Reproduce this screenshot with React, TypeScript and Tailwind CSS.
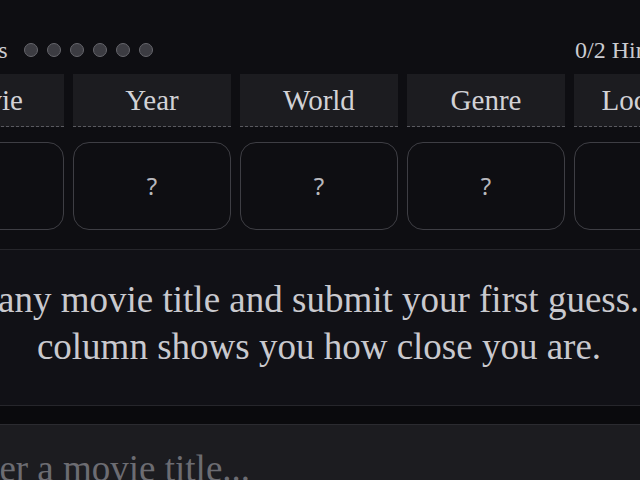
const COLUMNS = ['Movie', 'Year', 'World', 'Genre', 'Location'];

const serif = { fontFamily: '"Liberation Serif", "DejaVu Serif", serif' };

function GuessDots({ count }: { count: number }) {
  return (
    <div className="flex items-center gap-[9px]">
      {Array.from({ length: count }).map((_, i) => (
        <span
          key={i}
          className="block h-[14px] w-[14px] rounded-full border-[1.5px] border-[#66666c] bg-[#3c3c42]"
        />
      ))}
    </div>
  );
}

export default function App() {
  return (
    <div
      className="h-[480px] w-[640px] overflow-hidden bg-[#0e0e12] text-[#c9c9ce]"
      style={serif}
    >
      <div className="ml-[-94px] w-[826px]">
        {/* status row */}
        <div className="mt-[38px] flex h-[24px] items-center justify-between">
          <div className="flex items-center gap-[16px] pl-[23px]">
            <span className="text-[24px] leading-none text-[#cbcbd0]">Guesses</span>
            <GuessDots count={6} />
          </div>
          <span className="w-[157px] text-[24px] leading-none text-[#cbcbd0]">0/2 Hints</span>
        </div>

        {/* column headers */}
        <div className="mt-[12px] grid grid-cols-5 gap-[9px]">
          {COLUMNS.map((c) => (
            <div
              key={c}
              className="flex h-[53px] items-center justify-center border-b border-dashed border-[#5a5a60] bg-[#1c1c20] pt-[1px] text-[29px] text-[#d2d2d6]"
            >
              {c}
            </div>
          ))}
        </div>

        {/* empty answer row */}
        <div className="mt-[15px] grid grid-cols-5 gap-[9px]">
          {COLUMNS.map((c, i) => (
            <div
              key={c}
              className="flex h-[88px] items-center justify-center rounded-[16px] border-[1.5px] border-[#3e3e44] text-[24px] text-[#b8b8bd]"
              style={{ fontFamily: '"Noto Sans", "DejaVu Sans", sans-serif' }}
            >
              {i === 0 ? '' : '?'}
            </div>
          ))}
        </div>
      </div>

      {/* hint panel */}
      <div className="mt-[19px] border-y border-[#26262b] bg-[#111116]">
        <div className="ml-[-94px] w-[826px] px-[6px] pb-[35px] pt-[26px] text-center text-[37px] leading-[47px] text-[#c9c9ce]">
          Type any movie title and submit your first guess. Each column shows you how close you
          are.
        </div>
      </div>

      <div className="h-[18px] bg-[#0a0a0d]" />

      {/* input */}
      <div className="border-t border-[#2b2b30] bg-[#1c1c20]">
        <div className="ml-[-94px] w-[826px] px-[42px] pt-[20px] text-[37px] leading-[47px] text-[#6c6c72]">
          Enter a movie title...
        </div>
      </div>
    </div>
  );
}
